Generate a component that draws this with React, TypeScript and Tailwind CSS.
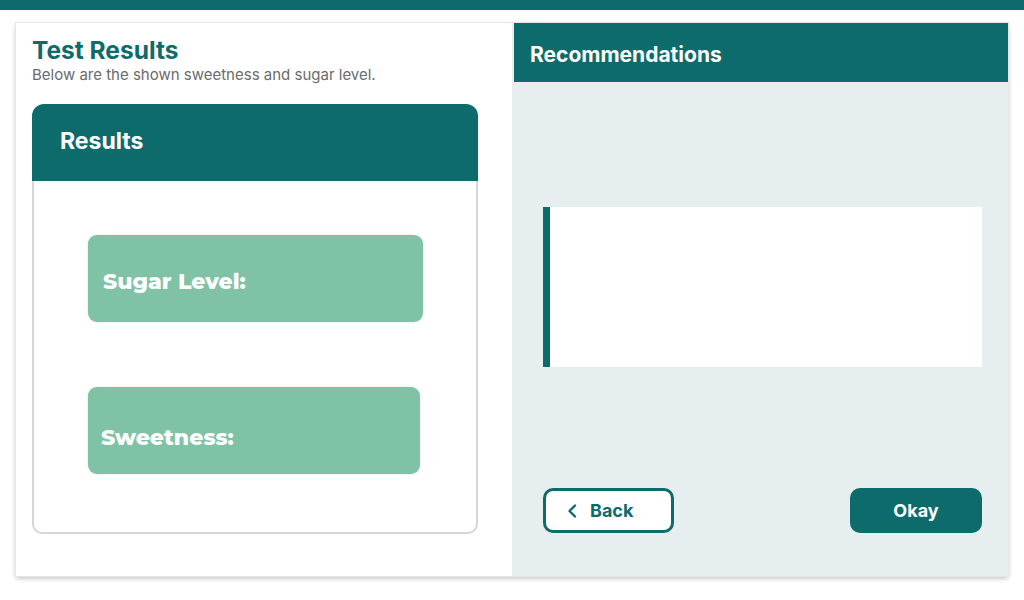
import React from 'react';

function ResultBox({ label, className }: { label: string; className: string }) {
  return (
    <div
      className={`bg-[#7fc2a6] rounded-[9px] h-[87px] flex items-center shadow-[0_0_3px_rgba(0,0,0,0.12)] ${className}`}
    >
      <span className="font-['Montserrat','Inter',sans-serif] font-extrabold text-[22px] text-white">
        {label}
      </span>
    </div>
  );
}

export default function App() {
  return (
    <div className="w-[1024px] h-[600px] bg-white font-['Inter',sans-serif] flex flex-col">
      <div className="h-[10px] bg-[#0e6b6b]" />

      <div className="px-4 pt-[13px]">
        <div className="h-[553px] flex bg-white shadow-[0_0_0_1px_#e6e6e6,0_2px_5px_rgba(0,0,0,0.28)]">
          {/* left column */}
          <div className="w-[496px] px-4 pt-[13px]">
            <h1 className="text-[24.5px] leading-[29px] font-bold text-[#0e6b6b]">Test Results</h1>
            <p className="text-[15px] leading-[20px] text-[#6b6b6b]">
              Below are the shown sweetness and sugar level.
            </p>

            <div className="mt-[19px] w-[446px]">
              <div className="h-[77px] bg-[#0e6b6b] rounded-t-[12px] flex items-center pl-[28px] pb-[3px]">
                <h2 className="text-[23px] font-bold text-white">Results</h2>
              </div>
              <div className="h-[353px] border-2 border-t-0 border-[#d6d6d6] rounded-b-[10px] pt-[54px] pl-[54px] flex flex-col">
                <ResultBox label="Sugar Level:" className="w-[335px] pl-[15px] pt-[6px]" />
                <ResultBox label="Sweetness:" className="w-[332px] pl-[13px] pt-[14px] mt-[65px]" />
              </div>
            </div>
          </div>

          {/* right column */}
          <div className="flex-1 bg-[#e6eeef] flex flex-col">
            <div className="h-[59px] bg-[#0e6b6b] ml-[2px] flex items-center pl-[16px] pt-[4px]">
              <h2 className="text-[21px] font-bold text-white">Recommendations</h2>
            </div>

            <div className="pl-[31px] pr-[26px] pt-[125px] flex flex-col">
              <div className="h-[160px] bg-white border-l-[7px] border-[#0e6b6b]" />

              <div className="mt-[121px] flex justify-between">
                <button className="w-[131px] h-[45px] bg-white border-[3px] border-[#0e6b6b] rounded-[10px] flex items-center pl-[21px] gap-[13px] text-[#0e6b6b]">
                  <svg width="10" height="14" viewBox="0 0 10 14" fill="none">
                    <path
                      d="M8 1.5 L2.5 7 L8 12.5"
                      stroke="#0e6b6b"
                      strokeWidth="2.4"
                      strokeLinecap="round"
                      strokeLinejoin="round"
                    />
                  </svg>
                  <span className="text-[18px] font-bold">Back</span>
                </button>
                <button className="w-[132px] h-[45px] bg-[#0e6b6b] rounded-[10px] flex items-center justify-center text-white">
                  <span className="text-[18px] font-bold">Okay</span>
                </button>
              </div>
            </div>
          </div>
        </div>
      </div>
    </div>
  );
}
